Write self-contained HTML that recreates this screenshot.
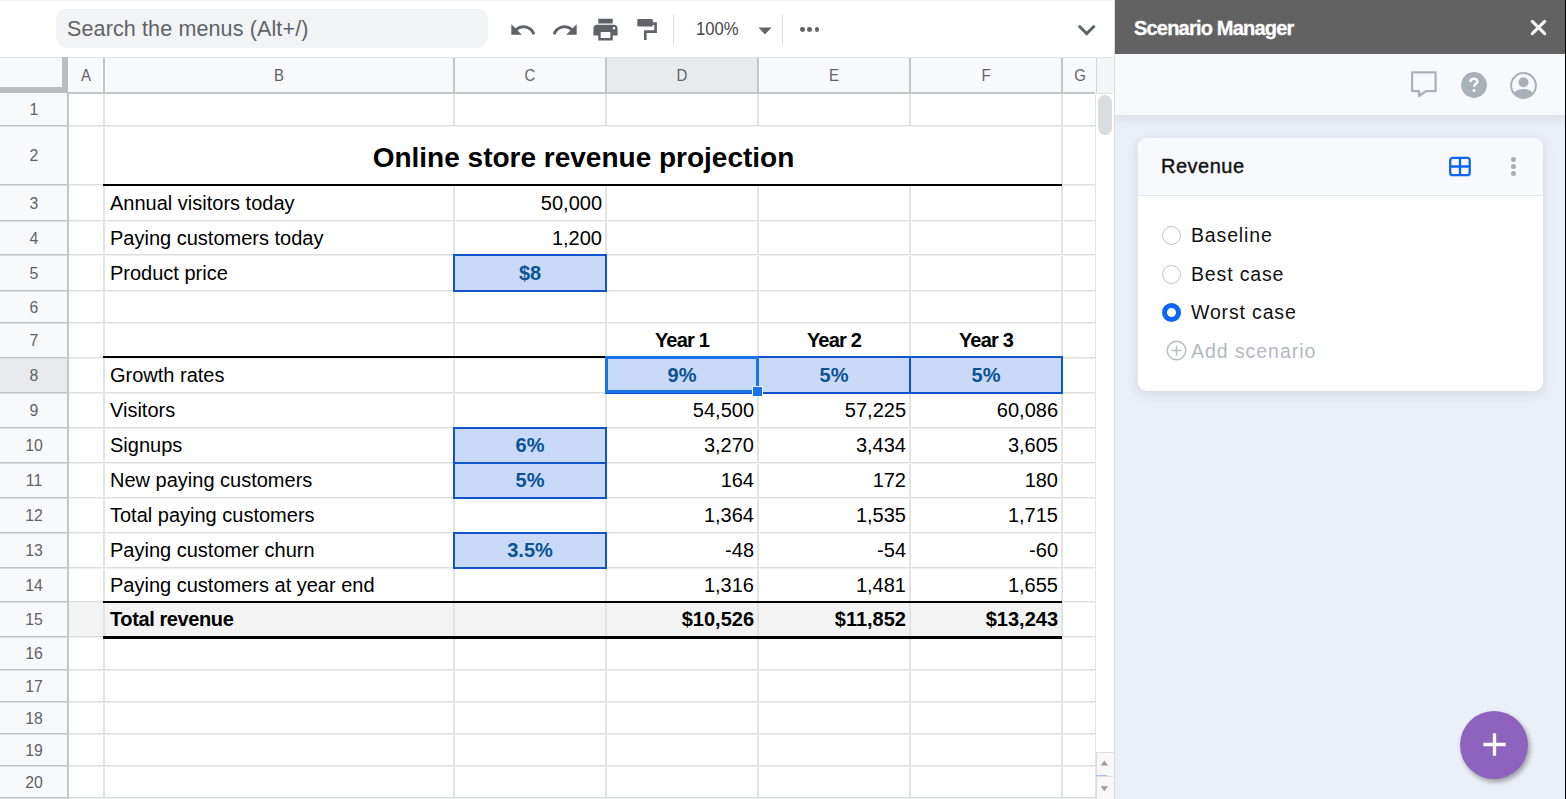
<!DOCTYPE html>
<html><head><meta charset="utf-8"><style>
html,body{margin:0;padding:0;}
body{width:1566px;height:799px;overflow:hidden;position:relative;background:#fff;font-family:"Liberation Sans", sans-serif;}
body>div{position:absolute;}
.t{white-space:nowrap;}
svg{position:absolute;overflow:visible}
</style></head><body>
<div style="left:0px;top:0px;width:1114px;height:1px;background:#f1f3f4;"></div>
<div style="left:56px;top:9px;width:432px;height:39px;background:#f1f3f4;border-radius:11px"></div>
<div class="t" style="left:67px;top:7.5px;line-height:43.0px;font-size:21.5px;font-weight:400;color:#5f6368;letter-spacing:0.13px">Search the menus (Alt+/)</div>
<div style="left:0px;top:57px;width:1114px;height:1px;background:#e3e3e3;"></div>
<div style="left:0px;top:58px;width:1114px;height:35px;background:#f8f9fa;"></div>
<div style="left:606px;top:58px;width:152px;height:34px;background:#e8eaed;"></div>
<div style="left:1096px;top:58px;width:18px;height:35px;background:#f5f5f5;"></div>
<div style="left:103px;top:58px;width:2px;height:34px;background:#c4c7c5;"></div>
<div style="left:453px;top:58px;width:2px;height:34px;background:#c4c7c5;"></div>
<div style="left:605px;top:58px;width:2px;height:34px;background:#c4c7c5;"></div>
<div style="left:757px;top:58px;width:2px;height:34px;background:#c4c7c5;"></div>
<div style="left:909px;top:58px;width:2px;height:34px;background:#c4c7c5;"></div>
<div style="left:1061px;top:58px;width:2px;height:34px;background:#c4c7c5;"></div>
<div style="left:1096px;top:58px;width:1px;height:35px;background:#d6d6d6;"></div>
<div style="left:0px;top:92px;width:1095px;height:2px;background:#c4c7c5;"></div>
<div style="left:1097px;top:93px;width:16px;height:1px;background:#e3e3e3;"></div>
<div style="left:62px;top:57px;width:6px;height:36px;background:#bdbdbd;"></div>
<div style="left:0px;top:87px;width:68px;height:6px;background:#bdbdbd;"></div>
<div class="t" style="left:-214.0px;width:600px;text-align:center;top:58.5px;line-height:34px;font-size:17px;font-weight:400;color:#5f6368;transform:scaleX(0.88)">A</div>
<div class="t" style="left:-21.0px;width:600px;text-align:center;top:58.5px;line-height:34px;font-size:17px;font-weight:400;color:#5f6368;transform:scaleX(0.88)">B</div>
<div class="t" style="left:230.0px;width:600px;text-align:center;top:58.5px;line-height:34px;font-size:17px;font-weight:400;color:#5f6368;transform:scaleX(0.88)">C</div>
<div class="t" style="left:382.0px;width:600px;text-align:center;top:58.5px;line-height:34px;font-size:17px;font-weight:400;color:#5f6368;transform:scaleX(0.88)">D</div>
<div class="t" style="left:534.0px;width:600px;text-align:center;top:58.5px;line-height:34px;font-size:17px;font-weight:400;color:#5f6368;transform:scaleX(0.88)">E</div>
<div class="t" style="left:686.0px;width:600px;text-align:center;top:58.5px;line-height:34px;font-size:17px;font-weight:400;color:#5f6368;transform:scaleX(0.88)">F</div>
<div class="t" style="left:780.0px;width:600px;text-align:center;top:58.5px;line-height:34px;font-size:17px;font-weight:400;color:#5f6368;transform:scaleX(0.88)">G</div>
<div style="left:0px;top:93px;width:67px;height:706px;background:#f8f9fa;"></div>
<div style="left:0px;top:358px;width:67px;height:34px;background:#e8eaed;"></div>
<div style="left:67px;top:93px;width:2px;height:706px;background:#c4c7c5;"></div>
<div style="left:69px;top:94px;width:1027px;height:705px;background:#ffffff;"></div>
<div style="left:69px;top:603px;width:993px;height:33px;background:#f3f3f3;"></div>
<div style="left:103px;top:94px;width:2px;height:705px;background:#e2e3e3;"></div>
<div style="left:453px;top:94px;width:2px;height:705px;background:#e2e3e3;"></div>
<div style="left:605px;top:94px;width:2px;height:705px;background:#e2e3e3;"></div>
<div style="left:757px;top:94px;width:2px;height:705px;background:#e2e3e3;"></div>
<div style="left:909px;top:94px;width:2px;height:705px;background:#e2e3e3;"></div>
<div style="left:1061px;top:94px;width:2px;height:705px;background:#e2e3e3;"></div>
<div style="left:1095px;top:94px;width:1px;height:705px;background:#e2e3e3;"></div>
<div style="left:0px;top:125px;width:67px;height:1px;background:#c2c2c2;"></div>
<div style="left:0px;top:126px;width:67px;height:1px;background:#dcdddd;"></div>
<div style="left:69px;top:125px;width:1027px;height:1px;background:#dcdddd;"></div>
<div style="left:69px;top:126px;width:1027px;height:1px;background:#eeefef;"></div>
<div style="left:0px;top:184px;width:67px;height:1px;background:#c2c2c2;"></div>
<div style="left:0px;top:185px;width:67px;height:1px;background:#dcdddd;"></div>
<div style="left:69px;top:184px;width:1027px;height:1px;background:#dcdddd;"></div>
<div style="left:69px;top:185px;width:1027px;height:1px;background:#eeefef;"></div>
<div style="left:0px;top:220px;width:67px;height:1px;background:#c2c2c2;"></div>
<div style="left:0px;top:221px;width:67px;height:1px;background:#dcdddd;"></div>
<div style="left:69px;top:220px;width:1027px;height:1px;background:#dcdddd;"></div>
<div style="left:69px;top:221px;width:1027px;height:1px;background:#eeefef;"></div>
<div style="left:0px;top:254px;width:67px;height:1px;background:#c2c2c2;"></div>
<div style="left:0px;top:255px;width:67px;height:1px;background:#dcdddd;"></div>
<div style="left:69px;top:254px;width:1027px;height:1px;background:#dcdddd;"></div>
<div style="left:69px;top:255px;width:1027px;height:1px;background:#eeefef;"></div>
<div style="left:0px;top:290px;width:67px;height:1px;background:#c2c2c2;"></div>
<div style="left:0px;top:291px;width:67px;height:1px;background:#dcdddd;"></div>
<div style="left:69px;top:290px;width:1027px;height:1px;background:#dcdddd;"></div>
<div style="left:69px;top:291px;width:1027px;height:1px;background:#eeefef;"></div>
<div style="left:0px;top:322px;width:67px;height:1px;background:#c2c2c2;"></div>
<div style="left:0px;top:323px;width:67px;height:1px;background:#dcdddd;"></div>
<div style="left:69px;top:322px;width:1027px;height:1px;background:#dcdddd;"></div>
<div style="left:69px;top:323px;width:1027px;height:1px;background:#eeefef;"></div>
<div style="left:0px;top:357px;width:67px;height:1px;background:#c2c2c2;"></div>
<div style="left:0px;top:358px;width:67px;height:1px;background:#dcdddd;"></div>
<div style="left:69px;top:357px;width:1027px;height:1px;background:#dcdddd;"></div>
<div style="left:69px;top:358px;width:1027px;height:1px;background:#eeefef;"></div>
<div style="left:0px;top:392px;width:67px;height:1px;background:#c2c2c2;"></div>
<div style="left:0px;top:393px;width:67px;height:1px;background:#dcdddd;"></div>
<div style="left:69px;top:392px;width:1027px;height:1px;background:#dcdddd;"></div>
<div style="left:69px;top:393px;width:1027px;height:1px;background:#eeefef;"></div>
<div style="left:0px;top:427px;width:67px;height:1px;background:#c2c2c2;"></div>
<div style="left:0px;top:428px;width:67px;height:1px;background:#dcdddd;"></div>
<div style="left:69px;top:427px;width:1027px;height:1px;background:#dcdddd;"></div>
<div style="left:69px;top:428px;width:1027px;height:1px;background:#eeefef;"></div>
<div style="left:0px;top:462px;width:67px;height:1px;background:#c2c2c2;"></div>
<div style="left:0px;top:463px;width:67px;height:1px;background:#dcdddd;"></div>
<div style="left:69px;top:462px;width:1027px;height:1px;background:#dcdddd;"></div>
<div style="left:69px;top:463px;width:1027px;height:1px;background:#eeefef;"></div>
<div style="left:0px;top:497px;width:67px;height:1px;background:#c2c2c2;"></div>
<div style="left:0px;top:498px;width:67px;height:1px;background:#dcdddd;"></div>
<div style="left:69px;top:497px;width:1027px;height:1px;background:#dcdddd;"></div>
<div style="left:69px;top:498px;width:1027px;height:1px;background:#eeefef;"></div>
<div style="left:0px;top:532px;width:67px;height:1px;background:#c2c2c2;"></div>
<div style="left:0px;top:533px;width:67px;height:1px;background:#dcdddd;"></div>
<div style="left:69px;top:532px;width:1027px;height:1px;background:#dcdddd;"></div>
<div style="left:69px;top:533px;width:1027px;height:1px;background:#eeefef;"></div>
<div style="left:0px;top:567px;width:67px;height:1px;background:#c2c2c2;"></div>
<div style="left:0px;top:568px;width:67px;height:1px;background:#dcdddd;"></div>
<div style="left:69px;top:567px;width:1027px;height:1px;background:#dcdddd;"></div>
<div style="left:69px;top:568px;width:1027px;height:1px;background:#eeefef;"></div>
<div style="left:0px;top:601px;width:67px;height:1px;background:#c2c2c2;"></div>
<div style="left:0px;top:602px;width:67px;height:1px;background:#dcdddd;"></div>
<div style="left:69px;top:601px;width:1027px;height:1px;background:#dcdddd;"></div>
<div style="left:69px;top:602px;width:1027px;height:1px;background:#eeefef;"></div>
<div style="left:0px;top:636px;width:67px;height:1px;background:#c2c2c2;"></div>
<div style="left:0px;top:637px;width:67px;height:1px;background:#dcdddd;"></div>
<div style="left:69px;top:636px;width:1027px;height:1px;background:#dcdddd;"></div>
<div style="left:69px;top:637px;width:1027px;height:1px;background:#eeefef;"></div>
<div style="left:0px;top:669px;width:67px;height:1px;background:#c2c2c2;"></div>
<div style="left:0px;top:670px;width:67px;height:1px;background:#dcdddd;"></div>
<div style="left:69px;top:669px;width:1027px;height:1px;background:#dcdddd;"></div>
<div style="left:69px;top:670px;width:1027px;height:1px;background:#eeefef;"></div>
<div style="left:0px;top:701px;width:67px;height:1px;background:#c2c2c2;"></div>
<div style="left:0px;top:702px;width:67px;height:1px;background:#dcdddd;"></div>
<div style="left:69px;top:701px;width:1027px;height:1px;background:#dcdddd;"></div>
<div style="left:69px;top:702px;width:1027px;height:1px;background:#eeefef;"></div>
<div style="left:0px;top:733px;width:67px;height:1px;background:#c2c2c2;"></div>
<div style="left:0px;top:734px;width:67px;height:1px;background:#dcdddd;"></div>
<div style="left:69px;top:733px;width:1027px;height:1px;background:#dcdddd;"></div>
<div style="left:69px;top:734px;width:1027px;height:1px;background:#eeefef;"></div>
<div style="left:0px;top:765px;width:67px;height:1px;background:#c2c2c2;"></div>
<div style="left:0px;top:766px;width:67px;height:1px;background:#dcdddd;"></div>
<div style="left:69px;top:765px;width:1027px;height:1px;background:#dcdddd;"></div>
<div style="left:69px;top:766px;width:1027px;height:1px;background:#eeefef;"></div>
<div style="left:0px;top:797px;width:67px;height:1px;background:#c2c2c2;"></div>
<div style="left:0px;top:798px;width:67px;height:1px;background:#dcdddd;"></div>
<div style="left:69px;top:797px;width:1027px;height:1px;background:#dcdddd;"></div>
<div style="left:69px;top:798px;width:1027px;height:1px;background:#eeefef;"></div>
<div style="left:1096px;top:94px;width:18px;height:705px;background:#ffffff;"></div>
<div style="left:1098px;top:95px;width:14px;height:40px;background:#dadce0;border-radius:7px"></div>
<div style="left:1114px;top:0px;width:1px;height:799px;background:#dadce0;"></div>
<div class="t" style="left:-266px;width:600px;text-align:center;top:93.2px;line-height:34px;font-size:17px;font-weight:400;color:#5f6368;transform:scaleX(0.93)">1</div>
<div class="t" style="left:-266px;width:600px;text-align:center;top:139.2px;line-height:34px;font-size:17px;font-weight:400;color:#5f6368;transform:scaleX(0.93)">2</div>
<div class="t" style="left:-266px;width:600px;text-align:center;top:186.7px;line-height:34px;font-size:17px;font-weight:400;color:#5f6368;transform:scaleX(0.93)">3</div>
<div class="t" style="left:-266px;width:600px;text-align:center;top:221.7px;line-height:34px;font-size:17px;font-weight:400;color:#5f6368;transform:scaleX(0.93)">4</div>
<div class="t" style="left:-266px;width:600px;text-align:center;top:256.7px;line-height:34px;font-size:17px;font-weight:400;color:#5f6368;transform:scaleX(0.93)">5</div>
<div class="t" style="left:-266px;width:600px;text-align:center;top:290.7px;line-height:34px;font-size:17px;font-weight:400;color:#5f6368;transform:scaleX(0.93)">6</div>
<div class="t" style="left:-266px;width:600px;text-align:center;top:324.2px;line-height:34px;font-size:17px;font-weight:400;color:#5f6368;transform:scaleX(0.93)">7</div>
<div class="t" style="left:-266px;width:600px;text-align:center;top:359.2px;line-height:34px;font-size:17px;font-weight:400;color:#5f6368;transform:scaleX(0.93)">8</div>
<div class="t" style="left:-266px;width:600px;text-align:center;top:394.2px;line-height:34px;font-size:17px;font-weight:400;color:#5f6368;transform:scaleX(0.93)">9</div>
<div class="t" style="left:-266px;width:600px;text-align:center;top:429.2px;line-height:34px;font-size:17px;font-weight:400;color:#5f6368;transform:scaleX(0.93)">10</div>
<div class="t" style="left:-266px;width:600px;text-align:center;top:464.2px;line-height:34px;font-size:17px;font-weight:400;color:#5f6368;transform:scaleX(0.93)">11</div>
<div class="t" style="left:-266px;width:600px;text-align:center;top:499.20000000000005px;line-height:34px;font-size:17px;font-weight:400;color:#5f6368;transform:scaleX(0.93)">12</div>
<div class="t" style="left:-266px;width:600px;text-align:center;top:534.2px;line-height:34px;font-size:17px;font-weight:400;color:#5f6368;transform:scaleX(0.93)">13</div>
<div class="t" style="left:-266px;width:600px;text-align:center;top:568.7px;line-height:34px;font-size:17px;font-weight:400;color:#5f6368;transform:scaleX(0.93)">14</div>
<div class="t" style="left:-266px;width:600px;text-align:center;top:603.2px;line-height:34px;font-size:17px;font-weight:400;color:#5f6368;transform:scaleX(0.93)">15</div>
<div class="t" style="left:-266px;width:600px;text-align:center;top:637.2px;line-height:34px;font-size:17px;font-weight:400;color:#5f6368;transform:scaleX(0.93)">16</div>
<div class="t" style="left:-266px;width:600px;text-align:center;top:669.7px;line-height:34px;font-size:17px;font-weight:400;color:#5f6368;transform:scaleX(0.93)">17</div>
<div class="t" style="left:-266px;width:600px;text-align:center;top:701.7px;line-height:34px;font-size:17px;font-weight:400;color:#5f6368;transform:scaleX(0.93)">18</div>
<div class="t" style="left:-266px;width:600px;text-align:center;top:733.7px;line-height:34px;font-size:17px;font-weight:400;color:#5f6368;transform:scaleX(0.93)">19</div>
<div class="t" style="left:-266px;width:600px;text-align:center;top:765.7px;line-height:34px;font-size:17px;font-weight:400;color:#5f6368;transform:scaleX(0.93)">20</div>
<div style="left:106px;top:127px;width:955px;height:57px;background:#ffffff;"></div>
<div style="left:103px;top:184px;width:959px;height:2px;background:#000;"></div>
<div style="left:103px;top:356px;width:503px;height:2px;background:#000;"></div>
<div style="left:103px;top:601px;width:959px;height:2px;background:#000;"></div>
<div style="left:103px;top:636px;width:959px;height:3px;background:#000;"></div>
<div style="left:453px;top:254px;width:154px;height:38px;background:#c9daf8;box-sizing:border-box;border:2px solid #1155cc"></div>
<div style="left:453px;top:427px;width:154px;height:37px;background:#c9daf8;box-sizing:border-box;border:2px solid #1155cc"></div>
<div style="left:453px;top:462px;width:154px;height:37px;background:#c9daf8;box-sizing:border-box;border:2px solid #1155cc"></div>
<div style="left:453px;top:532px;width:154px;height:37px;background:#c9daf8;box-sizing:border-box;border:2px solid #1155cc"></div>
<div style="left:757px;top:356px;width:154px;height:38px;background:#c9daf8;box-sizing:border-box;border:2px solid #1155cc"></div>
<div style="left:909px;top:356px;width:154px;height:38px;background:#c9daf8;box-sizing:border-box;border:2px solid #1155cc"></div>
<div style="left:605px;top:356px;width:154px;height:38px;background:#c9daf8;box-sizing:border-box;border:2px solid #1155cc"></div>
<div style="left:605px;top:356px;width:154px;height:37px;background:transparent;box-sizing:border-box;border:3px solid #1a73e8"></div>
<div style="left:752px;top:386px;width:11px;height:11px;background:#1a73e8;box-sizing:border-box;border:1px solid #fff"></div>
<div class="t" style="left:283.5px;width:600px;text-align:center;top:130.0px;line-height:56px;font-size:28px;font-weight:700;color:#000;">Online store revenue projection</div>
<div class="t" style="left:110px;top:182.5px;line-height:40px;font-size:20px;font-weight:400;color:#000;">Annual visitors today</div>
<div class="t" style="left:110px;top:217.5px;line-height:40px;font-size:20px;font-weight:400;color:#000;">Paying customers today</div>
<div class="t" style="left:110px;top:252.5px;line-height:40px;font-size:20px;font-weight:400;color:#000;">Product price</div>
<div class="t" style="left:110px;top:355.0px;line-height:40px;font-size:20px;font-weight:400;color:#000;">Growth rates</div>
<div class="t" style="left:110px;top:390.0px;line-height:40px;font-size:20px;font-weight:400;color:#000;">Visitors</div>
<div class="t" style="left:110px;top:425.0px;line-height:40px;font-size:20px;font-weight:400;color:#000;">Signups</div>
<div class="t" style="left:110px;top:460.0px;line-height:40px;font-size:20px;font-weight:400;color:#000;">New paying customers</div>
<div class="t" style="left:110px;top:495.0px;line-height:40px;font-size:20px;font-weight:400;color:#000;">Total paying customers</div>
<div class="t" style="left:110px;top:530.0px;line-height:40px;font-size:20px;font-weight:400;color:#000;">Paying customer churn</div>
<div class="t" style="left:110px;top:564.5px;line-height:40px;font-size:20px;font-weight:400;color:#000;">Paying customers at year end</div>
<div class="t" style="left:110px;top:599.0px;line-height:40px;font-size:20px;font-weight:700;color:#000;letter-spacing:-0.4px">Total revenue</div>
<div class="t" style="left:202px;width:400px;text-align:right;top:182.5px;line-height:40px;font-size:20px;font-weight:400;color:#000;">50,000</div>
<div class="t" style="left:202px;width:400px;text-align:right;top:217.5px;line-height:40px;font-size:20px;font-weight:400;color:#000;">1,200</div>
<div class="t" style="left:230px;width:600px;text-align:center;top:252.5px;line-height:40px;font-size:20px;font-weight:700;color:#0b5394;">$8</div>
<div class="t" style="left:230px;width:600px;text-align:center;top:425.0px;line-height:40px;font-size:20px;font-weight:700;color:#0b5394;">6%</div>
<div class="t" style="left:230px;width:600px;text-align:center;top:460.0px;line-height:40px;font-size:20px;font-weight:700;color:#0b5394;">5%</div>
<div class="t" style="left:230px;width:600px;text-align:center;top:530.0px;line-height:40px;font-size:20px;font-weight:700;color:#0b5394;">3.5%</div>
<div class="t" style="left:382px;width:600px;text-align:center;top:320.0px;line-height:40px;font-size:20px;font-weight:700;color:#000;letter-spacing:-0.8px">Year 1</div>
<div class="t" style="left:534px;width:600px;text-align:center;top:320.0px;line-height:40px;font-size:20px;font-weight:700;color:#000;letter-spacing:-0.8px">Year 2</div>
<div class="t" style="left:686px;width:600px;text-align:center;top:320.0px;line-height:40px;font-size:20px;font-weight:700;color:#000;letter-spacing:-0.8px">Year 3</div>
<div class="t" style="left:382px;width:600px;text-align:center;top:355.0px;line-height:40px;font-size:20px;font-weight:700;color:#0b5394;">9%</div>
<div class="t" style="left:534px;width:600px;text-align:center;top:355.0px;line-height:40px;font-size:20px;font-weight:700;color:#0b5394;">5%</div>
<div class="t" style="left:686px;width:600px;text-align:center;top:355.0px;line-height:40px;font-size:20px;font-weight:700;color:#0b5394;">5%</div>
<div class="t" style="left:354px;width:400px;text-align:right;top:390.0px;line-height:40px;font-size:20px;font-weight:400;color:#000;">54,500</div>
<div class="t" style="left:506px;width:400px;text-align:right;top:390.0px;line-height:40px;font-size:20px;font-weight:400;color:#000;">57,225</div>
<div class="t" style="left:658px;width:400px;text-align:right;top:390.0px;line-height:40px;font-size:20px;font-weight:400;color:#000;">60,086</div>
<div class="t" style="left:354px;width:400px;text-align:right;top:425.0px;line-height:40px;font-size:20px;font-weight:400;color:#000;">3,270</div>
<div class="t" style="left:506px;width:400px;text-align:right;top:425.0px;line-height:40px;font-size:20px;font-weight:400;color:#000;">3,434</div>
<div class="t" style="left:658px;width:400px;text-align:right;top:425.0px;line-height:40px;font-size:20px;font-weight:400;color:#000;">3,605</div>
<div class="t" style="left:354px;width:400px;text-align:right;top:460.0px;line-height:40px;font-size:20px;font-weight:400;color:#000;">164</div>
<div class="t" style="left:506px;width:400px;text-align:right;top:460.0px;line-height:40px;font-size:20px;font-weight:400;color:#000;">172</div>
<div class="t" style="left:658px;width:400px;text-align:right;top:460.0px;line-height:40px;font-size:20px;font-weight:400;color:#000;">180</div>
<div class="t" style="left:354px;width:400px;text-align:right;top:495.0px;line-height:40px;font-size:20px;font-weight:400;color:#000;">1,364</div>
<div class="t" style="left:506px;width:400px;text-align:right;top:495.0px;line-height:40px;font-size:20px;font-weight:400;color:#000;">1,535</div>
<div class="t" style="left:658px;width:400px;text-align:right;top:495.0px;line-height:40px;font-size:20px;font-weight:400;color:#000;">1,715</div>
<div class="t" style="left:354px;width:400px;text-align:right;top:530.0px;line-height:40px;font-size:20px;font-weight:400;color:#000;">-48</div>
<div class="t" style="left:506px;width:400px;text-align:right;top:530.0px;line-height:40px;font-size:20px;font-weight:400;color:#000;">-54</div>
<div class="t" style="left:658px;width:400px;text-align:right;top:530.0px;line-height:40px;font-size:20px;font-weight:400;color:#000;">-60</div>
<div class="t" style="left:354px;width:400px;text-align:right;top:564.5px;line-height:40px;font-size:20px;font-weight:400;color:#000;">1,316</div>
<div class="t" style="left:506px;width:400px;text-align:right;top:564.5px;line-height:40px;font-size:20px;font-weight:400;color:#000;">1,481</div>
<div class="t" style="left:658px;width:400px;text-align:right;top:564.5px;line-height:40px;font-size:20px;font-weight:400;color:#000;">1,655</div>
<div class="t" style="left:354px;width:400px;text-align:right;top:599.0px;line-height:40px;font-size:20px;font-weight:700;color:#000;">$10,526</div>
<div class="t" style="left:506px;width:400px;text-align:right;top:599.0px;line-height:40px;font-size:20px;font-weight:700;color:#000;">$11,852</div>
<div class="t" style="left:658px;width:400px;text-align:right;top:599.0px;line-height:40px;font-size:20px;font-weight:700;color:#000;">$13,243</div>
<svg style="left:508.7px;top:15.7px" width="28" height="28" viewBox="0 0 24 24"><path fill="#5f6368" d="M12.5 8c-2.65 0-5.05.99-6.9 2.6L2 7v9h9l-3.62-3.62c1.39-1.16 3.16-1.88 5.12-1.88 3.54 0 6.55 2.31 7.6 5.5l2.37-.78C21.08 11.03 17.15 8 12.5 8z"/></svg>
<svg style="left:550.6px;top:15.7px" width="28" height="28" viewBox="0 0 24 24"><path fill="#5f6368" d="M18.4 10.6C16.55 8.99 14.15 8 11.5 8c-4.65 0-8.58 3.03-9.96 7.22L3.9 16c1.05-3.19 4.05-5.5 7.6-5.5 1.95 0 3.73.72 5.12 1.88L13 16h9V7l-3.6 3.6z"/></svg>
<svg style="left:591px;top:14.9px" width="29" height="29" viewBox="0 0 24 24"><path fill="#5f6368" d="M19 8H5c-1.66 0-3 1.34-3 3v6h4v4h12v-4h4v-6c0-1.66-1.34-3-3-3zm-3 11H8v-5h8v5zm3-7c-.55 0-1-.45-1-1s.45-1 1-1 1 .45 1 1-.45 1-1 1zm-1-9H6v4h12V3z"/></svg>
<svg style="left:630px;top:14.5px" width="32" height="30" viewBox="0 0 32 30"><rect x="7.3" y="3.9" width="15.5" height="7.6" rx="1.2" fill="#5f6368"/><path fill="none" stroke="#5f6368" stroke-width="2.6" d="M22.5 8.6H25.6V16.6H15.3V25"/></svg>
<div style="left:673px;top:15px;width:1px;height:29px;background:#dadce0;"></div>
<div style="left:782px;top:15px;width:1px;height:29px;background:#dadce0;"></div>
<div class="t" style="left:695.5px;top:9.899999999999999px;line-height:37.0px;font-size:18.5px;font-weight:400;color:#444746;transform:scaleX(0.9);transform-origin:0 0">100%</div>
<svg style="left:757.5px;top:26.8px" width="14" height="8" viewBox="0 0 14 8"><path fill="#5f6368" d="M0.5 0.5H13.5L7 7.5z"/></svg>
<div style="left:799.8000000000001px;top:27.1px;width:4.8px;height:4.8px;background:#5f6368;border-radius:50%"></div>
<div style="left:807.2px;top:27.1px;width:4.8px;height:4.8px;background:#5f6368;border-radius:50%"></div>
<div style="left:814.7px;top:27.1px;width:4.8px;height:4.8px;background:#5f6368;border-radius:50%"></div>
<svg style="left:1076px;top:22px" width="22" height="16" viewBox="0 0 22 16"><path fill="none" stroke="#5f6368" stroke-width="3" d="M2.8 3.7L10.7 11.6L18.6 3.7"/></svg>
<div style="left:1115px;top:0px;width:451px;height:799px;background:#ebeff7;"></div>
<div style="left:1115px;top:54px;width:451px;height:61px;background:#f8f9fc;box-shadow:0 4px 10px rgba(60,70,90,0.10);clip-path:inset(0 0 -30px 0)"></div>
<div style="left:1115px;top:0px;width:451px;height:54px;background:#626262;"></div>
<div class="t" style="left:1134px;top:7.600000000000001px;line-height:40px;font-size:20px;font-weight:700;color:#fff;letter-spacing:-0.8px;-webkit-text-stroke:0.3px #fff">Scenario Manager</div>
<svg style="left:1530.1px;top:19.1px" width="17" height="17" viewBox="0 0 17 17"><path stroke="#f6f6f6" stroke-width="3.1" stroke-linecap="round" d="M2.3 2.3L14.7 14.7M14.7 2.3L2.3 14.7"/></svg>
<svg style="left:1408px;top:68px" width="32" height="32" viewBox="0 0 32 32"><path fill="none" stroke="#aab0b8" stroke-width="2.2" stroke-linejoin="round" d="M4.1 4.4H27.6V23.1H17.9L11.1 28V23.1H4.1Z"/></svg>
<svg style="left:1460.9px;top:71.6px" width="26" height="26" viewBox="0 0 26 26"><circle cx="13" cy="13" r="12.9" fill="#aab0b8"/><path fill="none" stroke="#fff" stroke-width="2.4" d="M9.3 10.2C9.5 7.5 11.2 6.8 13 6.8C15 6.8 16.6 8 16.4 9.8C16.2 11.6 13.4 12 13 14.6"/><circle cx="13" cy="18.6" r="1.5" fill="#fff"/></svg>
<svg style="left:1510.4px;top:71.9px" width="27" height="27" viewBox="0 0 27 27"><circle cx="13.5" cy="13.5" r="12.4" fill="none" stroke="#aab0b8" stroke-width="2"/><circle cx="13.5" cy="10.3" r="5" fill="#aab0b8"/><path fill="#aab0b8" d="M4 21.2C6 18.3 9.5 17 13.5 17C17.5 17 21 18.3 23 21.2C20.8 24.2 17.3 26 13.5 26C9.7 26 6.2 24.2 4 21.2Z"/></svg>
<div style="left:1138px;top:138px;width:405px;height:253px;background:#ffffff;border-radius:9px;box-shadow:0 3px 12px rgba(80,90,120,0.16);overflow:hidden"></div>
<div style="left:1138px;top:138px;width:405px;height:57px;background:#f8f9fc;border-radius:9px 9px 0 0;border-bottom:1px solid #e6e8ec"></div>
<div class="t" style="left:1161px;top:146.4px;line-height:40px;font-size:20px;font-weight:400;color:#111;letter-spacing:0.5px;-webkit-text-stroke:0.4px #111">Revenue</div>
<svg style="left:1448px;top:156px" width="24" height="21" viewBox="0 0 24 21"><rect x="2.2" y="1.9" width="19.5" height="17.3" rx="2.5" fill="none" stroke="#0d64f6" stroke-width="2.3"/><path stroke="#0d64f6" stroke-width="2.3" d="M12 2V19M2 10.5H22"/></svg>
<div style="left:1511px;top:157.2px;width:5px;height:5px;background:#a9aeb6;border-radius:50%"></div>
<div style="left:1511px;top:163.9px;width:5px;height:5px;background:#a9aeb6;border-radius:50%"></div>
<div style="left:1511px;top:170.5px;width:5px;height:5px;background:#a9aeb6;border-radius:50%"></div>
<div style="left:1161.5px;top:225.5px;width:19px;height:19px;background:#ffffff;box-sizing:border-box;border-radius:50%;border:1.3px solid #c4c4c4"></div>
<div class="t" style="left:1191px;top:215.5px;line-height:39.0px;font-size:19.5px;font-weight:400;color:#111;letter-spacing:0.85px">Baseline</div>
<div style="left:1161.5px;top:264.5px;width:19px;height:19px;background:#ffffff;box-sizing:border-box;border-radius:50%;border:1.3px solid #c4c4c4"></div>
<div class="t" style="left:1191px;top:254.5px;line-height:39.0px;font-size:19.5px;font-weight:400;color:#111;letter-spacing:0.85px">Best case</div>
<div style="left:1161.5px;top:303.3px;width:19px;height:19px;background:#ffffff;box-sizing:border-box;border-radius:50%;border:5.5px solid #0d64f6"></div>
<div class="t" style="left:1191px;top:293.3px;line-height:39.0px;font-size:19.5px;font-weight:400;color:#111;letter-spacing:0.85px">Worst case</div>
<svg style="left:1165.5px;top:339.6px" width="21" height="21" viewBox="0 0 21 21"><circle cx="10.5" cy="10.5" r="9.3" fill="none" stroke="#b8bcc3" stroke-width="1.5"/><path stroke="#b8bcc3" stroke-width="1.5" d="M10.5 5.5V15.5M5.5 10.5H15.5"/></svg>
<div class="t" style="left:1191px;top:331.9px;line-height:39.0px;font-size:19.5px;font-weight:400;color:#b4b8bf;letter-spacing:0.95px">Add scenario</div>
<div style="left:1460px;top:711px;width:68px;height:68px;background:#8e63be;border-radius:50%;box-shadow:2px 3px 5px rgba(0,0,0,0.35)"></div>
<svg style="left:1481.5px;top:731.7px" width="25" height="25" viewBox="0 0 25 25"><path stroke="#fff" stroke-width="3.3" d="M12.5 1.35V23.65M1.35 12.5H23.65"/></svg>
<div style="left:1565px;top:0px;width:1px;height:799px;background:#000;"></div>
<div style="left:1096px;top:752px;width:18px;height:47px;background:#f8f8f8;box-sizing:border-box;border-left:1px solid #dcdcdc;border-top:1px solid #e0e0e0"></div>
<div style="left:1097px;top:776px;width:16px;height:1px;background:#e2e2e2;"></div>
<div style="left:1096px;top:775px;width:11px;height:1px;background:#a9c1f0;"></div>
<svg style="left:1100px;top:760px" width="9" height="6" viewBox="0 0 9 6"><path fill="#9c9c9c" d="M0.6 5.6H8.1L4.35 0.6z"/></svg>
<svg style="left:1100px;top:786px" width="9" height="6" viewBox="0 0 9 6"><path fill="#9c9c9c" d="M0.6 0.3H8.1L4.35 5.2z"/></svg>
</body></html>
